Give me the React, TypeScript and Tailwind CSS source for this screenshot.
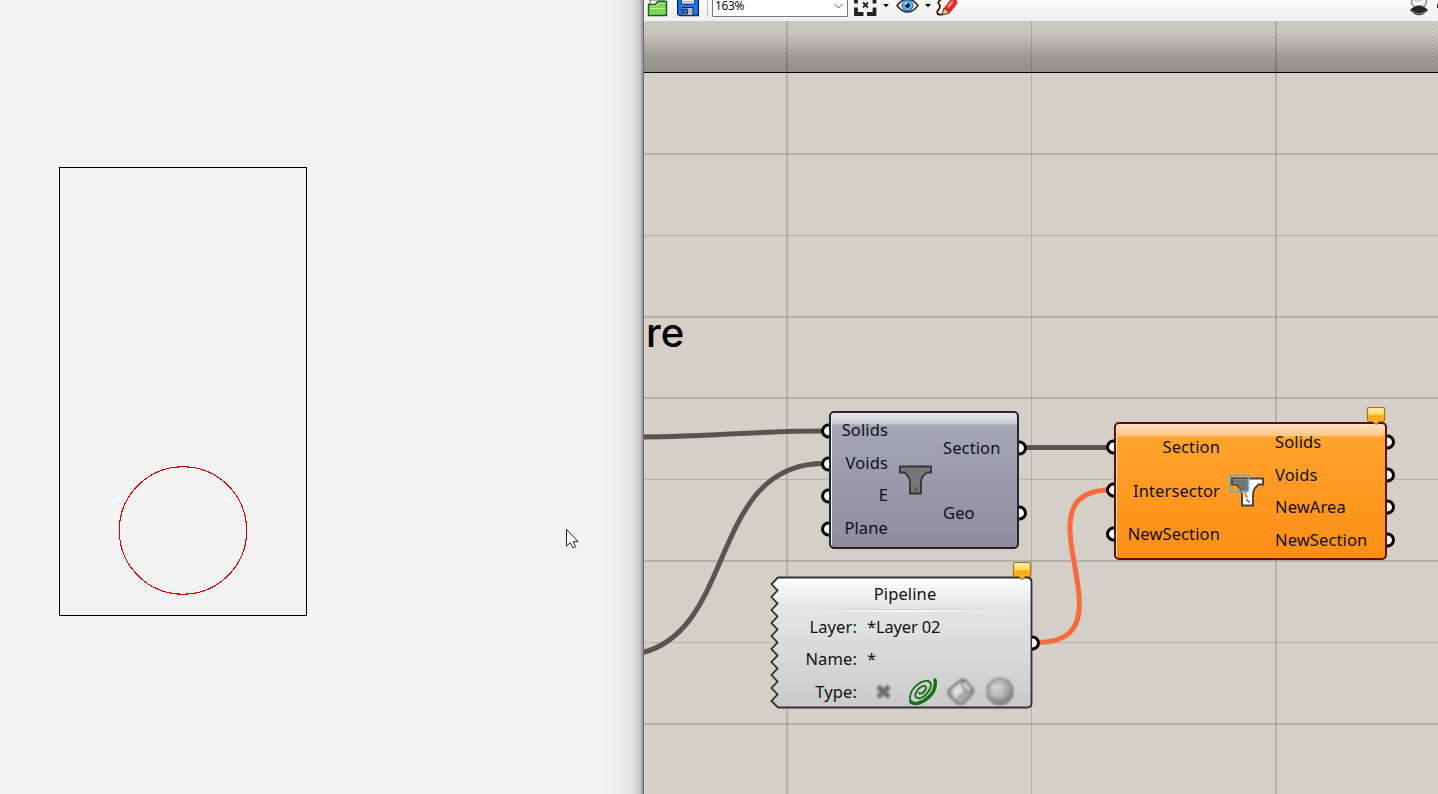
import React from "react";

const font = "font-['Noto_Sans','Open_Sans',sans-serif]";

function Port({ side, y }: { side: "left" | "right"; y: number }) {
  return (
    <svg
      className={side === "left" ? "absolute -left-[10px]" : "absolute -right-[10px]"}
      style={{ top: y - 8 }}
      width="8"
      height="16"
      viewBox="0 0 8 16"
    >
      <circle cx={side === "left" ? 7.4 : 0.6} cy="8" r="5.9" fill="#fff" stroke="#000" strokeWidth="3" />
    </svg>
  );
}

function Balloon() {
  return (
    <svg className="block" width="20" height="20" viewBox="0 0 20 20">
      <defs>
        <linearGradient id="balloon" x1="0" y1="0" x2="0" y2="1">
          <stop offset="0" stopColor="#fff0b0" />
          <stop offset=".4" stopColor="#ffdc60" />
          <stop offset=".48" stopColor="#fdb61c" />
          <stop offset=".8" stopColor="#ffb51e" />
          <stop offset="1" stopColor="#ffe45e" />
        </linearGradient>
      </defs>
      <path
        d="M3 1.500h14q1.500 0 1.500 1.300v11.200q0 1.500-1.500 1.500h-4l-3 3-3-3H3q-1.500 0-1.500-1.500V2.800Q1.500 1.500 3 1.500z"
        fill="url(#balloon)"
        stroke="#ab741b"
        strokeWidth="1.200"
      />
      <path d="M3 13h14M4.500 10.500h2m2 0h2m2 0h2" stroke="#e98a08" strokeDasharray="1.500 1" opacity=".7" />
    </svg>
  );
}

function Labels({ items, className }: { items: string[]; className: string }) {
  return (
    <div className={"flex flex-col " + className}>
      {items.map((t) => (
        <div key={t} className="flex flex-1 items-center whitespace-pre leading-none">
          <span className="block">{t}</span>
        </div>
      ))}
    </div>
  );
}

const tee = "M1 1.5H32V7.5H27.500L24 11Q22 14 22 18V28.500H11V18Q11 14 9 11L5.500 7.500H1z";

function Toolbar() {
  return (
    <header className="flex h-[21px] w-full items-start overflow-hidden bg-gradient-to-b from-[#fafafa] to-[#f0f0f0]">
      <svg className="ml-[3px] shrink-0" width="21" height="17" viewBox="0 0 21 17">
        <path d="M3 0v8h14V0z" fill="#fff" stroke="#555" />
        <path d="M1.500 15.500V4.500H8l3-3h8.500v14z" fill="#7ed456" stroke="#0d6412" strokeWidth="1.400" />
        <path d="M3 6h6l3-3h6M3 8.500h15" fill="none" stroke="#b5f28f" />
      </svg>
      <svg className="ml-[9px] shrink-0" width="22" height="17" viewBox="0 0 22 17">
        <path d="M.7-1h20.600v16.500H2.500L.7 14z" fill="#1b7bf5" stroke="#0a2080" strokeWidth="1.400" />
        <path d="M4.500-1h13v5h-13z" fill="#f2f2f2" stroke="#0a2c9c" />
        <path d="M6 1.500h10" stroke="#aaa" />
        <path d="M5 7.500h11v8H5z" fill="#b8b8b8" stroke="#102060" />
        <path d="M6.500 9h4v5h-4z" fill="#1473ef" stroke="#123" strokeWidth=".8" />
      </svg>
      <div className="ml-2 h-4 w-px shrink-0 bg-[#bdbdbd]" />
      <div className="ml-1 flex h-[17px] w-[136px] shrink-0 items-start justify-between rounded-b-[2px] border border-t-0 border-[#767676] bg-white pl-[2px]">
        <span className="block font-['Open_Sans',sans-serif] text-[12px] leading-[11px] tracking-[-0.4px] text-black">163%</span>
        <svg className="mr-1" width="9" height="12" viewBox="0 0 9 12">
          <path d="M.5 4l4 4 4-4" fill="none" stroke="#555" />
        </svg>
      </div>
      <svg className="ml-[6px] shrink-0" width="23" height="17" viewBox="0 0 23 17">
        <path d="M2 0v3.500M20.500 0v3.500M2 7.500v6.500h7.500M20.500 7.500v6.500h-7.500" fill="none" stroke="#222" strokeWidth="3.800" />
        <path d="M9 2.500l5 5m0-5l-5 5" stroke="#222" strokeWidth="1.800" />
      </svg>
      <Caret />
      <svg className="ml-[7px] shrink-0" width="23" height="14" viewBox="0 0 23 14">
        <path d="M1 5.500Q6-1 11.500-1T22 5.500Q17 12 11.500 12T1 5.500z" fill="#eef7fb" stroke="#333" strokeWidth="1.700" />
        <circle cx="11.500" cy="5.500" r="5.400" fill="#58b8ec" stroke="#15598a" />
        <circle cx="11.500" cy="5.500" r="2.400" fill="#071d30" />
        <circle cx="10" cy="3.500" r="1.100" fill="#fff" />
      </svg>
      <Caret />
      <svg className="ml-[4px] shrink-0" width="24" height="17" viewBox="0 0 24 17">
        <path d="M6 0C-1 3 8 4 4 9C0 13 3 16 9 14" fill="none" stroke="#3b1714" strokeWidth="1.800" />
        <path d="M9 8L15 0h6q2 1 1 4l-7 9z" fill="#e2262b" />
        <path d="M13 7l5-6" stroke="#ff9890" strokeWidth="2.200" />
        <path d="M9 8l5.500 5L7 15z" fill="#f5c268" stroke="#5c2417" />
      </svg>
      <svg className="ml-auto shrink-0" width="29" height="17" viewBox="0 0 29 17">
        <circle cx="10" cy="1.500" r="7.500" fill="#d5d5d5" stroke="#666" />
        <path d="M4 1.500q5 5 12-1" fill="none" stroke="#fff" strokeWidth="2.500" />
        <path d="M1 10Q10 1 19 10Q10 20.500 1 10z" fill="#252525" />
        <path d="M3 11q7 6 14 0" fill="none" stroke="#bbb" strokeWidth=".8" />
        <path d="M28 4h1v4h-1z" fill="#222" />
      </svg>
    </header>
  );
}

function Caret() {
  return (
    <svg className="ml-[6px] mt-1 shrink-0" width="6" height="4" viewBox="0 0 6 4">
      <path d="M0 0h6L3 3.300z" fill="#000" />
    </svg>
  );
}

function Viewport() {
  return (
    <section className="h-full w-[644px] shrink-0 bg-[#f3f3f3]">
      <svg className="block" width="644" height="794" viewBox="0 0 644 794">
        <defs>
          <linearGradient id="edge">
            <stop offset="0" stopColor="#f3f3f3" />
            <stop offset=".5" stopColor="#ececec" />
            <stop offset=".75" stopColor="#e2e2e2" />
            <stop offset=".9" stopColor="#cfcfcf" />
            <stop offset="1" stopColor="#b8b8b8" />
          </linearGradient>
        </defs>
        <rect x="602" width="40" height="794" fill="url(#edge)" />
        <rect x="641" width="2" height="794" fill="#a3a3a3" />
        <rect x="643" width="1" height="794" fill="#666" />
        <rect x="59.500" y="167.500" width="247" height="448" fill="none" stroke="#000" />
        <circle cx="183" cy="530.500" r="63.700" fill="none" stroke="#d00" strokeWidth="1.100" shapeRendering="crispEdges" />
        <path d="M566.500 529.500v16.700l3.800-3.500 2.800 5.300 2.600-1.300-2.600-5h5z" fill="#fff" stroke="#222833" />
      </svg>
    </section>
  );
}

function Canvas() {
  const rows = [153, 316, 397, 560, 723];
  const thin = [235, 479, 642];
  return (
    <section className={"relative min-h-0 flex-1 overflow-hidden bg-[#d4d0c8] text-[16.5px] tracking-[0.12px] text-[#111] " + font}>
      <svg className="absolute left-0 top-0" width="794" height="773" viewBox="644 21 794 773">
        <defs>
          <linearGradient id="band" x1="0" y1="0" x2="0" y2="1">
            <stop offset="0" stopColor="#c5c2b9" />
            <stop offset=".25" stopColor="#bfbdb4" />
            <stop offset=".7" stopColor="#95938d" />
            <stop offset="1" stopColor="#8b8a84" />
          </linearGradient>
          <pattern id="hatch" width="4" height="4" patternUnits="userSpaceOnUse">
            <path d="M-1 1l2-2M0 4l4-4M3 5l2-2" stroke="#fff" strokeOpacity=".25" strokeWidth="1.400" />
          </pattern>
          <linearGradient id="hatchFade" x1="0" y1="0" x2="0" y2="1">
            <stop offset="0" stopColor="#fff" />
            <stop offset="1" stopColor="#555" />
          </linearGradient>
          <mask id="fade"><rect x="644" y="21" width="794" height="51" fill="url(#hatchFade)" /></mask>
        </defs>
        <rect x="644" y="21" width="794" height="51" fill="url(#band)" />
        <rect x="644" y="21" width="794" height="51" fill="url(#hatch)" mask="url(#fade)" />
        <g fill="#000" fillOpacity=".14">
          {rows.map((y) => <rect key={y} x="644" y={y} width="794" height="2" />)}
          {thin.map((y) => <rect key={y} x="644" y={y} width="794" height="1" />)}
          <rect x="786" y="21" width="2" height="773" />
          <rect x="1031" y="21" width="1" height="773" />
          <rect x="1275" y="21" width="2" height="773" />
        </g>
        <rect x="644" y="72" width="794" height="1" fill="#000" />
        <g fill="none" strokeWidth="5">
          <path d="M640 437C710 437 750 431 824 431" stroke="#585652" />
          <path d="M636 654C738 636 707 463.500 824 463.500" stroke="#585652" />
          <path d="M1024 447.500h86" stroke="#585652" />
          <path d="M1038 642.500C1138 642.500 1012 490 1110 490" stroke="#f86a40" />
        </g>
      </svg>
      <span className="absolute left-[2px] top-[290px] font-['Inter',sans-serif] text-[40px] font-medium leading-[44px] tracking-normal text-black">re</span>

      <div className="absolute left-[185px] top-[390px] flex h-[138px] w-[190px] rounded-[5px] border-2 border-[#25272b] bg-linear-[to_bottom,#e8e8ee_0px,#c9c9d3_11px,#a6a6b7_12px,#8e8b9c_100%] pb-[3px] pt-px shadow-[inset_1px_1px_0_#eeeef4]">
        <Labels items={["Solids", "Voids", "E", "Plane"]} className="w-[57px] items-end" />
        <div className="flex w-[55px] items-center justify-center pt-[2px]">
          <svg width="33" height="30" viewBox="0 0 33 30">
            <path d={tee} fill="#777" stroke="#373737" strokeWidth="1.900" />
            <path d="M15 23h2v2h2" fill="none" stroke="#444" />
          </svg>
        </div>
        <Labels items={["Section", "Geo"]} className="items-start pt-[2px] -mb-[2px]" />
        <Port side="left" y={18} /><Port side="left" y={50.500} />
        <Port side="left" y={83} /><Port side="left" y={115.500} />
        <Port side="right" y={34.500} /><Port side="right" y={99.500} />
      </div>

      <div className="absolute left-[470px] top-[401px] flex h-[138px] w-[273px] rounded-[5px] border-2 border-[#601008] bg-linear-[to_bottom,#ffe3c3_0px,#ffc481_12px,#ffa42d_13px,#ff8d14_100%] py-0.5 shadow-[inset_1px_1px_0_#ffe6c9]">
        <Labels items={["Section", "Intersector", "NewSection"]} className="w-[104px] items-end" />
        <div className="flex w-[55px] items-center justify-center pb-[2px]">
          <svg className="mr-[2px]" width="36" height="33" viewBox="0 0 36 33">
            <g transform="translate(2 3)">
              <path d={tee} fill="#fff" stroke="#46423c" strokeWidth="1.900" />
              <path d="M2 2.500h15v12h-6L9 11 6 6.500H2z" fill="#747474" />
              <path d="M13 14l3 7" stroke="#ff941e" strokeWidth="2.500" />
              <path d="M15 23h2v2h2" fill="none" stroke="#333" />
            </g>
            <path d="M1 1.500h18.500v16H1z" fill="none" stroke="#5baede" strokeWidth="1.800" strokeDasharray="2 .5" />
          </svg>
        </div>
        <Labels items={["Solids", "Voids", "NewArea", "NewSection"]} className="items-start" />
        <Port side="left" y={23} /><Port side="left" y={66} /><Port side="left" y={109.500} />
        <Port side="right" y={18} /><Port side="right" y={50.500} />
        <Port side="right" y={83} /><Port side="right" y={116} />
        <div className="absolute -right-px -top-[18px]"><Balloon /></div>
      </div>

      <div className="absolute left-[126px] top-[555px] h-[133px] w-[263px]">
        <svg className="absolute left-0 top-0" width="263" height="133" viewBox="0 0 263 133">
          <defs>
            <linearGradient id="pipe" x1="0" y1="0" x2="0" y2="1">
              <stop offset="0" stopColor="#fff" />
              <stop offset=".22" stopColor="#e6e6e6" />
              <stop offset="1" stopColor="#cacaca" />
            </linearGradient>
            <linearGradient id="rule">
              <stop offset="0" stopColor="#fff" stopOpacity="0" />
              <stop offset=".5" stopColor="#fff" />
              <stop offset="1" stopColor="#fff" stopOpacity="0" />
            </linearGradient>
            <linearGradient id="shade">
              <stop offset="0" stopColor="#aaa" stopOpacity="0" />
              <stop offset=".5" stopColor="#aaa" stopOpacity=".5" />
              <stop offset="1" stopColor="#aaa" stopOpacity="0" />
            </linearGradient>
          </defs>
          <path
            d="M8 1.500H257Q261.500 1.500 261.500 6V127.500Q261.500 131.500 257 131.500H8L1.500 125 7.500 118.500 1.500 112 7.500 105.500 1.500 99 7.500 92.500 1.500 86 7.500 79.500 1.500 73 7.500 66.500 1.500 60 7.500 53.500 1.500 47 7.500 40.500 1.500 34 7.500 27.500 1.500 21 7.500 14.500 1.500 8z"
            fill="url(#pipe)"
            stroke="#303134"
            strokeWidth="1.800"
          />
          <rect x="18" y="33" width="228" height="1" fill="url(#shade)" />
          <rect x="18" y="34" width="228" height="1.500" fill="url(#rule)" />
        </svg>
        <div className="relative flex h-full flex-col pb-px pt-[2px]">
          <div className="flex flex-1 items-center justify-center pl-[7px] leading-none">Pipeline</div>
          <div className="flex flex-1 items-center leading-none">
            <span className="w-[87px] text-right">Layer:</span><span className="ml-[10px] tracking-[-0.15px]">*Layer 02</span>
          </div>
          <div className="flex flex-1 items-center leading-none">
            <span className="w-[87px] text-right">Name:</span><span className="ml-[10px]">*</span>
          </div>
          <div className="flex flex-1 items-center leading-none">
            <span className="w-[87px] text-right">Type:</span>
            <TypeIcons />
          </div>
        </div>
        <div className="absolute right-[3px] top-0">
          <Port side="right" y={66.500} />
        </div>
        <div className="absolute -top-[15px] right-px"><Balloon /></div>
      </div>
    </section>
  );
}

function TypeIcons() {
  return (
    <svg className="ml-[17px]" width="144" height="32" viewBox="874 676 144 32">
      <defs>
        <radialGradient id="ball" cx=".4" cy=".35" r=".65">
          <stop offset="0" stopColor="#d2d2d2" />
          <stop offset=".6" stopColor="#aaa" />
          <stop offset="1" stopColor="#7c7c7c" />
        </radialGradient>
        <filter id="soft" x="-20%" y="-20%" width="140%" height="140%"><feGaussianBlur stdDeviation=".9" /></filter>
      </defs>
      <g filter="url(#soft)">
        <path d="M878 686.500l11 10.500M889 686.500L878 697" stroke="#686868" strokeWidth="4.500" />
        <path d="M950 689l11-9q3-1 5 1l7 8q1 3-1 5l-8 9q-4 2-7 0l-8-8q-2-3 1-6z" fill="#a8a8a8" stroke="#787878" strokeWidth="2" />
        <path d="M952 690l8-7 4 7-9 9z" fill="#dedede" />
        <ellipse cx="966.500" cy="686.500" rx="3.500" ry="6" transform="rotate(-42 966.500 686.500)" fill="#c9c9c9" stroke="#777" strokeWidth="1.500" />
        <circle cx="1000" cy="691.500" r="13" fill="url(#ball)" stroke="#808080" strokeWidth="1.500" />
      </g>
      <path d="M993 685v11m4-12v13m4-13v13M991 687h14m-14 4h14m-14 4h13" stroke="#eee" strokeWidth=".7" opacity=".35" />
      <g fill="none" stroke="#176f19" strokeLinecap="round">
        <path d="M935 680C937 687 933 695 925 700C917 706 909 705 910 697C911 687 922 680 928 681C934 683 930 692 923 697C917 700 913 697 917 691C920 686 926 684 926 688C926 691 921 695 919 693" strokeWidth="1.900" />
        <path d="M935 680Q937 692 925 700Q915 706 911 702" strokeWidth="3.400" />
      </g>
    </svg>
  );
}

export default function App() {
  return (
    <main className="flex h-[794px] w-[1438px] overflow-hidden">
      <Viewport />
      <div className="flex min-w-0 flex-1 flex-col">
        <Toolbar />
        <Canvas />
      </div>
    </main>
  );
}
